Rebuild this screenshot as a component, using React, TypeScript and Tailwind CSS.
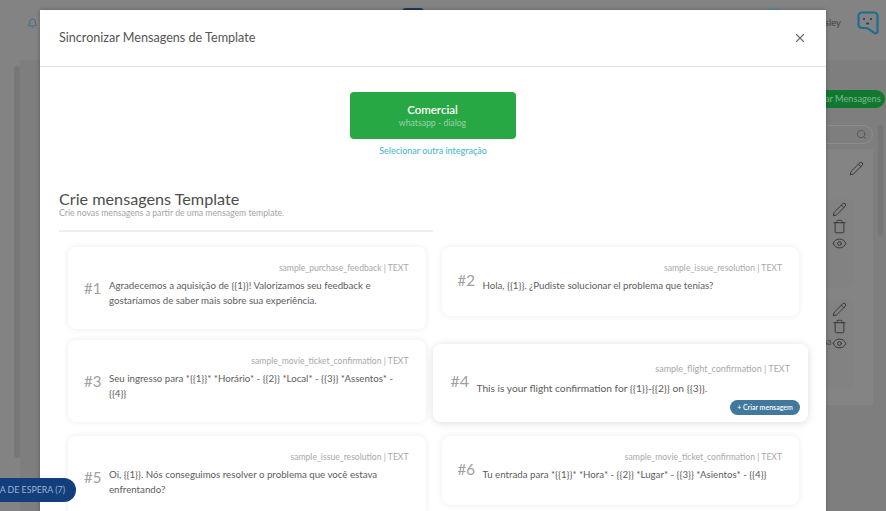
import React from 'react';
import { Bell, Eye, Pencil, Search, Trash, X } from 'lucide-react';

type Template = {
  id: number;
  label: string;
  text: React.ReactNode;
};

const Card: React.FC<{ item: Template; numberClass: string; height: string }> = ({ item, numberClass, height }) => (
  <div className={`${height} bg-white rounded-lg shadow-[0_0_6px_rgba(0,0,0,0.08)] pl-[16px] pr-[17px] pt-[15px]`}>
    <div className="text-right text-[8.6px] leading-[13px] text-[#a8a8a8]">{item.label}</div>
    <div className="flex mt-[3px]">
      <div className={`w-[25px] shrink-0 text-[15px] leading-[20px] text-[#a0a0a0] ${numberClass}`}>#{item.id}</div>
      <div className="text-[9.7px] leading-[14.5px] text-[#5c5c5c] pr-[2px]">{item.text}</div>
    </div>
  </div>
);

const SidePanel: React.FC<{ suffix?: string; height: string }> = ({ suffix, height }) => (
  <div className={`${height} w-[29px] bg-[#828282] rounded-r-lg flex flex-col items-center gap-[2px] pt-[3px] pr-[3px] text-[#333333]`}>
    <Pencil size={15} strokeWidth={1.5} />
    <Trash size={15} strokeWidth={1.5} />
    <div className="relative">
      {suffix && <span className="absolute right-[15px] top-0 text-[8.5px] text-[#444444]">{suffix}</span>}
      <Eye size={15} strokeWidth={1.5} />
    </div>
  </div>
);

export default function App() {
  return (
    <div className="relative w-[886px] h-[511px] overflow-hidden bg-[#7e7e7e] font-['Lato','Liberation_Sans',sans-serif]">
      {/* page behind the dialog */}
      <header className="relative h-[60px] bg-[#838383] flex items-center pl-[27px] pr-[7px] pb-[14px]">
        <Bell size={11} className="text-[#3d6c85]" />
        <div className="absolute left-[402px] top-[8px] w-[22px] h-[4px] rounded-t-full bg-[#1e3a5c]" />
        <div className="absolute left-[768px] top-[8px] w-[10px] h-[4px] bg-[#5f8a94]" />
        <div className="flex-1" />
        <span className="text-[9.5px] text-[#444444] mr-[16px]">Wesley</span>
        <svg width="22" height="24" viewBox="0 0 22 24" fill="none" stroke="#1c6d93" strokeWidth="2.2" strokeLinejoin="round" strokeLinecap="round">
          <path d="M5 1.5h12a3.5 3.5 0 0 1 3.5 3.5v15.5a2 2 0 0 1-3 1.6l-6-4.2c-1-.7-1.7-.9-3-.9H5A3.500 3.500 0 0 1 1.500 13.500V5A3.500 3.500 0 0 1 5 1.500z" />
          <path d="M7 8h.1M14 8h.1M10 12.500h1.200" stroke="#1c4a60" />
        </svg>
      </header>
      <div className="flex h-[451px]">
        <div className="w-[20px] bg-[#838383] pl-[14px] pt-[6px]">
          <div className="w-[6px] h-[392px] rounded-sm bg-[#777777]" />
        </div>
        <div className="flex-1" />
        <div className="w-[60px] pt-[30px] flex flex-col items-end">
          <div className="h-[18px] w-[60px] rounded-r-full bg-[#12782f] text-[9.2px] leading-[18px] text-[#7cb892] text-right pr-[9px] mr-[1px] whitespace-nowrap overflow-hidden">
            ar Mensagens
          </div>
          <div className="flex mt-[17px] w-[57px] self-start">
            <div className="w-[47px]">
              <div className="h-[19px] rounded-r-full border border-l-0 border-[#8c8c8c] flex justify-end items-center pr-[5px]">
                <Search size={11} className="text-[#555555]" />
              </div>
              <div className="bg-[#848484] h-[256px] mt-[5px] pt-[12px] flex flex-col">
                <div className="flex justify-end pr-[9px] h-[38px] text-[#333333]">
                  <Pencil size={15} strokeWidth={1.5} />
                </div>
                <SidePanel height="h-[89px]" />
                <div className="h-[11px]" />
                <SidePanel height="h-[89px]" suffix="na" />
              </div>
            </div>
            <div className="ml-[5px] w-[5px] h-[111px] rounded-full bg-[#767676]" />
          </div>
        </div>
      </div>

      {/* dialog */}
      <div className="absolute left-[40px] top-[10px] w-[786px] h-[510px] bg-white shadow-[0_0_4px_rgba(0,0,0,0.3)]">
        <div className="h-[57px] border-b border-[#e2e2e2] flex items-center justify-between pl-[19px] pr-[19px]">
          <h2 className="text-[12.6px] text-[#555555] pt-[1px]">Sincronizar Mensagens de Template</h2>
          <X size={14} strokeWidth={2} className="text-[#707070]" />
        </div>

        <div className="flex flex-col items-center pt-[25px]">
          <div className="w-[166px] h-[47px] rounded bg-[#28a745] flex flex-col items-center justify-center -ml-[1px]">
            <div className="text-[11.5px] leading-[15px] font-semibold text-white">Comercial</div>
            <div className="text-[8.7px] leading-[12px] text-[#9ad2a9]">whatsapp - dialog</div>
          </div>
          <div className="mt-[5px] text-[9px] leading-[14px] text-[#3db5ce]">Selecionar outra integração</div>
        </div>

        <div className="ml-[19px] w-[374px] mt-[31px] border-b-2 border-[#eeeeee] pb-[12px]">
          <div className="text-[16.2px] leading-[19px] text-[#4d4d4d]">Crie mensagens Template</div>
          <div className="text-[8.7px] leading-[10px] text-[#a5a5a5]">Crie novas mensagens a partir de uma mensagem template.</div>
        </div>

        <div className="ml-[28px] w-[731px] mt-[15px] grid grid-cols-2 gap-x-[16px]">
          <Card
            height="h-[82px]"
            numberClass=""
            item={{
              id: 1,
              label: 'sample_purchase_feedback | TEXT',
              text: 'Agradecemos a aquisição de {{1}}! Valorizamos seu feedback e gostaríamos de saber mais sobre sua experiência.',
            }}
          />
          <Card
            height="h-[69px]"
            numberClass="-mt-[8px]"
            item={{ id: 2, label: 'sample_issue_resolution | TEXT', text: 'Hola, {{1}}. ¿Pudiste solucionar el problema que tenías?' }}
          />

          <div className="mt-[11px]">
            <Card
              height="h-[82px]"
              numberClass=""
              item={{
                id: 3,
                label: 'sample_movie_ticket_confirmation | TEXT',
                text: 'Seu ingresso para *{{1}}* *Horário* - {{2}} *Local* - {{3}} *Assentos* - {{4}}',
              }}
            />
          </div>
          <div className="mt-[15px] -mx-[9px] h-[78px] bg-white rounded-lg shadow-[0_1px_8px_rgba(0,0,0,0.14)] pl-[18px] pr-[18px] pt-[18px]">
            <div className="text-right text-[9px] leading-[14px] text-[#a8a8a8]">sample_flight_confirmation | TEXT</div>
            <div className="flex mt-[5px]">
              <div className="w-[26px] shrink-0 -mt-[10px] text-[16px] leading-[20px] text-[#a0a0a0]">#4</div>
              <div className="text-[10.2px] leading-[15px] text-[#5c5c5c]">This is your flight confirmation for {'{{1}}'}-{'{{2}}'} on {'{{3}}'}.</div>
            </div>
            <div className="flex justify-end -mr-[10px] mt-[4px]">
              <div className="h-[15px] w-[70px] rounded-full bg-[#41789c] text-[7px] leading-[15px] text-white text-center font-semibold">+ Criar mensagem</div>
            </div>
          </div>

          <div className="mt-[14px]">
            <Card
              height="h-[82px]"
              numberClass=""
              item={{
                id: 5,
                label: 'sample_issue_resolution | TEXT',
                text: 'Oi, {{1}}. Nós conseguimos resolver o problema que você estava enfrentando?',
              }}
            />
          </div>
          <div className="mt-[14px]">
            <Card
              height="h-[69px]"
              numberClass="-mt-[8px]"
              item={{
                id: 6,
                label: 'sample_movie_ticket_confirmation | TEXT',
                text: 'Tu entrada para *{{1}}* *Hora* - {{2}} *Lugar* - {{3}} *Asientos* - {{4}}',
              }}
            />
          </div>
        </div>
      </div>

      {/* queue pill sits over the dialog */}
      <div className="absolute left-[-30px] bottom-[9px] w-[106px] h-[24px] rounded-full bg-[#123f7c] text-right pr-[11px] text-[8.8px] leading-[24px] text-[#9fb3cc] whitespace-nowrap">
        FILA DE ESPERA (7)
      </div>
    </div>
  );
}
